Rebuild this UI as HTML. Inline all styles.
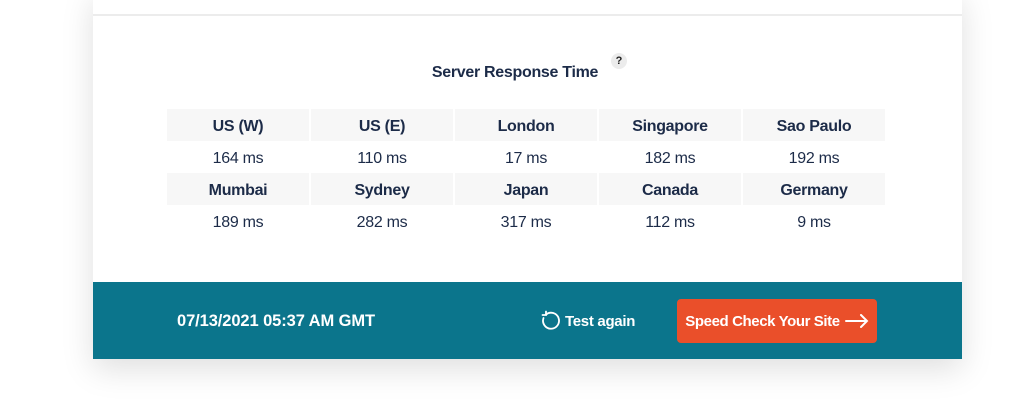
<!DOCTYPE html>
<html><head><style>
html,body{margin:0;padding:0;width:1024px;height:404px;background:#fff;overflow:hidden;font-family:"Liberation Sans",sans-serif;color:#1c2b48}
.card{position:absolute;left:93px;top:-10px;width:869px;height:369px;background:#fff;box-shadow:0 10px 30px rgba(0,0,0,0.13)}
.line{position:absolute;left:93px;top:14px;width:869px;height:2px;background:#ececec}
.title{position:absolute;left:0;width:1030px;top:64px;text-align:center;font-weight:bold;font-size:16px;letter-spacing:-0.3px}
.q{position:absolute;left:611px;top:53px;width:16px;height:16px;border-radius:50%;background:#ececec;font-size:11px;font-weight:bold;text-align:center;line-height:16px;color:#222}
table{position:absolute;left:165px;top:109px;border-collapse:separate;border-spacing:2px 0;}
td{width:142px;height:32px;padding:3px 0 0;box-sizing:border-box;text-align:center;font-size:16px;letter-spacing:-0.3px}
td.h{background:#f7f7f7;font-weight:bold}
.bar{position:absolute;left:93px;top:282px;width:869px;height:77px;background:#0b758c;color:#fff;font-weight:bold}
.date{position:absolute;left:84px;top:30px;font-size:16.5px;letter-spacing:-0.1px}
.again{position:absolute;left:447px;top:28px;font-size:15px;display:flex;align-items:center;gap:3px;letter-spacing:-0.3px}
.btn{position:absolute;left:584px;top:17px;width:200px;height:44px;background:#ea4f2a;border-radius:4px;font-size:15px;display:flex;align-items:center;justify-content:center;gap:5px;letter-spacing:-0.4px}
</style></head><body>
<div class="card"></div>
<div class="line"></div>
<div class="title">Server Response Time</div>
<div class="q">?</div>
<table>
<tr><td class="h">US (W)</td><td class="h">US (E)</td><td class="h">London</td><td class="h">Singapore</td><td class="h">Sao Paulo</td></tr>
<tr><td>164 ms</td><td>110 ms</td><td>17 ms</td><td>182 ms</td><td>192 ms</td></tr>
<tr><td class="h">Mumbai</td><td class="h">Sydney</td><td class="h">Japan</td><td class="h">Canada</td><td class="h">Germany</td></tr>
<tr><td>189 ms</td><td>282 ms</td><td>317 ms</td><td>112 ms</td><td>9 ms</td></tr>
</table>
<div class="bar">
<div class="date">07/13/2021 05:37 AM GMT</div>
<div class="again"><svg width="22" height="22" viewBox="0 0 22 22" fill="none" stroke="#fff" stroke-width="1.8" stroke-linecap="round"><path d="M6 4.5A8 8 0 1 1 3.5 8"/><path d="M6 1.5V5H2.5"/></svg>Test again</div>
<div class="btn">Speed Check Your Site <svg width="24" height="14" viewBox="0 0 24 14" fill="none" stroke="#fff" stroke-width="2" stroke-linecap="round"><path d="M1 7H22M16 1l6 6-6 6"/></svg></div>
</div>
</body></html>
